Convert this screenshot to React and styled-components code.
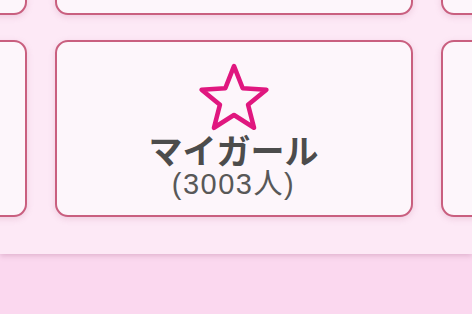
import styled, { createGlobalStyle } from "styled-components";

const GlobalStyle = createGlobalStyle`
  html, body {
    margin: 0;
    padding: 0;
    background: #fbd8ef;
    font-family: "Liberation Sans", "Noto Sans CJK JP", sans-serif;
  }
`;

const groups = [
  { id: "a", name: "お気に入り", count: 1200 },
  { id: "b", name: "新人", count: 420 },
  { id: "c", name: "ランキング", count: 88 },
  { id: "d", name: "常連さん", count: 512 },
  { id: "e", name: "マイガール", count: 3003, star: true },
  { id: "f", name: "おすすめ", count: 64 },
];

const StarIcon = () => (
  <svg width="74" height="74" viewBox="0 0 100 100">
    <polygon
      points="50,7 61.76,36.82 93.75,38.79 69.02,59.18 77.04,90.21 50,73 22.96,90.21 30.98,59.18 6.25,38.79 38.24,36.82"
      fill="none"
      stroke="#e0177f"
      strokeWidth="6.2"
      strokeLinejoin="round"
    />
  </svg>
);

const App = () => {
  return (
    <Page>
      <GlobalStyle />
      <Panel>
        <Grid>
          {groups.map((g) => (
            <Card key={g.id}>
              {g.star && <StarIcon />}
              <CardTitle>{g.name}</CardTitle>
              <CardCount>({g.count}人)</CardCount>
            </Card>
          ))}
        </Grid>
      </Panel>
    </Page>
  );
};

export default App;

const Page = styled.div`
  width: 472px;
  height: 314px;
  overflow: hidden;
  background: #fbd8ef;
`;

const Panel = styled.section`
  height: 254px;
  display: flex;
  flex-direction: column;
  justify-content: flex-end;
  align-items: center;
  overflow: hidden;
  padding-bottom: 37px;
  padding-right: 5px;
  box-sizing: border-box;
  background: #fde9f6;
  box-shadow: 0 2px 5px rgba(160, 90, 130, 0.28);
  position: relative;
`;

const Grid = styled.ul`
  list-style: none;
  margin: 0;
  padding: 0;
  display: grid;
  grid-template-columns: repeat(3, 358px);
  grid-auto-rows: 177px;
  column-gap: 28px;
  row-gap: 25px;
  flex-shrink: 0;
`;

const Card = styled.li`
  display: flex;
  flex-direction: column;
  align-items: center;
  justify-content: center;
  box-sizing: border-box;
  border: 2.5px solid #c95f7f;
  border-radius: 13px;
  background: #fdf6fb;
  box-shadow: 0 2px 6px rgba(180, 100, 140, 0.22);
  padding-top: 2px;

  & > svg {
    margin-bottom: -1px;
  }
`;

const CardTitle = styled.h3`
  margin: 0;
  font-size: 34px;
  line-height: 36px;
  font-weight: 700;
  color: #4c4c4c;
`;

const CardCount = styled.p`
  margin: 0;
  font-size: 29px;
  line-height: 28px;
  letter-spacing: 1.5px;
  color: #585858;
`;
